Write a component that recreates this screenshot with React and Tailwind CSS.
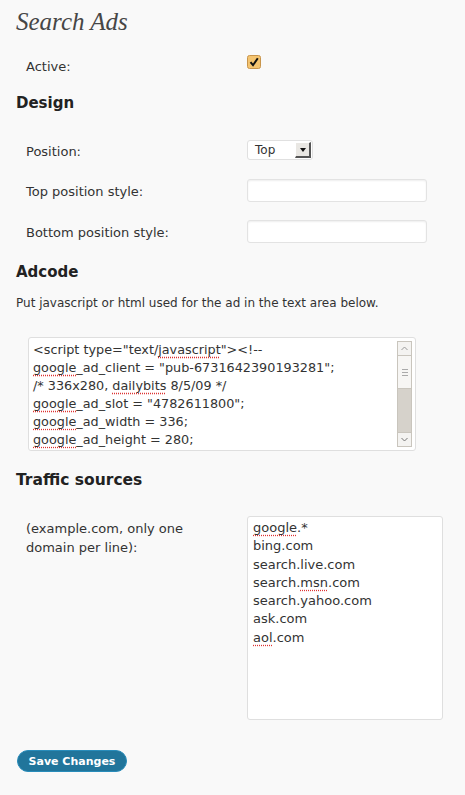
const Squiggle = ({ children }) => (
  <span className="underline decoration-dotted decoration-[#d33] underline-offset-[3px]">{children}</span>
);

const Checkbox = () => (
  <svg width="14" height="14" viewBox="0 0 14 14">
    <rect x="0.5" y="0.5" width="13" height="13" rx="2" fill="#f4c470" stroke="#c8954c" />
    <path d="M3.5 7.2 L6 10.2 L10.8 3.2" fill="none" stroke="#111" strokeWidth="2" />
  </svg>
);

const ScrollBar = () => (
  <div className="w-[15px] my-[3px] mr-[3px] flex flex-col border border-[#c9c5bd] bg-[#d6d2cb]">
    <div className="h-[14px] bg-[#f4f3f1] border-b border-[#c9c5bd] flex items-center justify-center">
      <svg width="7" height="5" viewBox="0 0 7 5">
        <path d="M0.5 4 L3.5 1 L6.5 4" fill="none" stroke="#999" strokeWidth="1" />
      </svg>
    </div>
    <div className="h-[33px] bg-[#f7f6f4] border-b border-[#c9c5bd] flex flex-col items-center justify-center gap-[2px]">
      <div className="w-[6px] h-px bg-[#aaa]" />
      <div className="w-[6px] h-px bg-[#aaa]" />
      <div className="w-[6px] h-px bg-[#aaa]" />
    </div>
    <div className="flex-1" />
    <div className="h-[14px] bg-[#f4f3f1] border-t border-[#c9c5bd] flex items-center justify-center">
      <svg width="7" height="5" viewBox="0 0 7 5">
        <path d="M0.5 1 L3.5 4 L6.5 1" fill="none" stroke="#777" strokeWidth="1" />
      </svg>
    </div>
  </div>
);

const TextInput = () => (
  <div className="w-[180px] h-[23px] bg-white border border-[#e3e3e3] rounded-[3px] shadow-[inset_0_1px_2px_rgba(0,0,0,0.07)]" />
);

export default function App() {
  const adcode = [
    <>&lt;script type="text/<Squiggle>javascript</Squiggle>"&gt;&lt;!--</>,
    <><Squiggle>google</Squiggle>_ad_client = "pub-6731642390193281";</>,
    <>/* 336x280, <Squiggle>dailybits</Squiggle> 8/5/09 */</>,
    <><Squiggle>google</Squiggle>_ad_slot = "4782611800";</>,
    <><Squiggle>google</Squiggle>_ad_width = 336;</>,
    <><Squiggle>google</Squiggle>_ad_height = 280;</>,
  ];

  const domains = [
    <><Squiggle>google</Squiggle>.*</>,
    <>bing.com</>,
    <>search.live.com</>,
    <>search.<Squiggle>msn</Squiggle>.com</>,
    <>search.yahoo.com</>,
    <>ask.com</>,
    <><Squiggle>aol</Squiggle>.com</>,
  ];

  return (
    <div className="min-h-[795px] w-[465px] bg-[#f9f9f9] pl-4 text-[#333] font-['DejaVu_Sans',sans-serif] text-[13px]">
      {/* Title */}
      <div className="h-[44px] pt-[8px]">
        <h1 className="text-[25px] leading-[28px] italic text-[#464646] font-['Liberation_Serif',serif] font-normal">
          Search Ads
        </h1>
      </div>

      {/* Active */}
      <div className="h-[40px] flex">
        <div className="w-[231px] pl-[10px] pt-[14px] leading-[18px]">Active:</div>
        <div className="pt-[11px]">
          <Checkbox />
        </div>
      </div>

      <div className="h-[38px] pt-[9px]">
        <h2 className="text-[15px] leading-[20px] font-bold text-[#222]">Design</h2>
      </div>

      {/* Position */}
      <div className="h-[48px] flex">
        <div className="w-[231px] pl-[10px] pt-[21px] leading-[18px]">Position:</div>
        <div className="pt-[18px]">
          <div className="w-[66px] h-[20px] bg-white border border-[#e0e0e0] rounded-[3px] flex items-center justify-between pl-[7px] pr-[1px]">
            <span className="text-[12px] leading-none">Top</span>
            <div className="w-[16px] h-[16px] bg-[#e9e7e3] border-r-2 border-b-2 border-[#555] border-l border-t border-l-[#fff] border-t-[#fff] flex items-center justify-center">
              <svg width="6" height="4" viewBox="0 0 6 4">
                <path d="M0 0 H6 L3 4 Z" fill="#111" />
              </svg>
            </div>
          </div>
        </div>
      </div>

      <div className="h-[41px] flex">
        <div className="w-[231px] pl-[10px] pt-[13px] leading-[18px]">Top position style:</div>
        <div className="pt-[9px]">
          <TextInput />
        </div>
      </div>

      <div className="h-[41px] flex">
        <div className="w-[231px] pl-[10px] pt-[13px] leading-[18px]">Bottom position style:</div>
        <div className="pt-[9px]">
          <TextInput />
        </div>
      </div>

      <div className="h-[38px] pt-[10px]">
        <h2 className="text-[15px] leading-[20px] font-bold text-[#222]">Adcode</h2>
      </div>

      <p className="pt-[4px] leading-[18px] text-[12px]">
        Put javascript or html used for the ad in the text area below.
      </p>

      {/* Adcode textarea */}
      <div className="mt-[25px] ml-[12px] w-[388px] h-[114px] bg-white border border-[#dfdfdf] rounded-[3px] flex overflow-hidden">
        <div className="flex-1 pl-[4px] pt-[3px] leading-[18px] text-[12.8px] whitespace-nowrap overflow-hidden">
          {adcode.map((line, i) => (
            <div key={i}>{line}</div>
          ))}
        </div>
        <ScrollBar />
      </div>

      <div className="mt-[19px] h-[20px]">
        <h2 className="text-[15.5px] leading-[20px] font-bold text-[#222]">Traffic sources</h2>
      </div>

      {/* Traffic sources */}
      <div className="flex">
        <div className="w-[231px] pl-[10px] pt-[29px] leading-[19px]">
          (example.com, only one
          <br />
          domain per line):
        </div>
        <div className="pt-[26px]">
          <div className="w-[196px] h-[204px] bg-white border border-[#dfdfdf] rounded-[3px] pl-[5px] pt-[2px] leading-[18.3px] text-[13px]">
            {domains.map((d, i) => (
              <div key={i}>{d}</div>
            ))}
          </div>
        </div>
      </div>

      <div className="pt-[30px] pl-[1px]">
        <button className="w-[110px] h-[22px] rounded-full bg-[#21759b] border border-[#298cba] text-white text-[11px] font-bold leading-none">
          Save Changes
        </button>
      </div>
    </div>
  );
}
